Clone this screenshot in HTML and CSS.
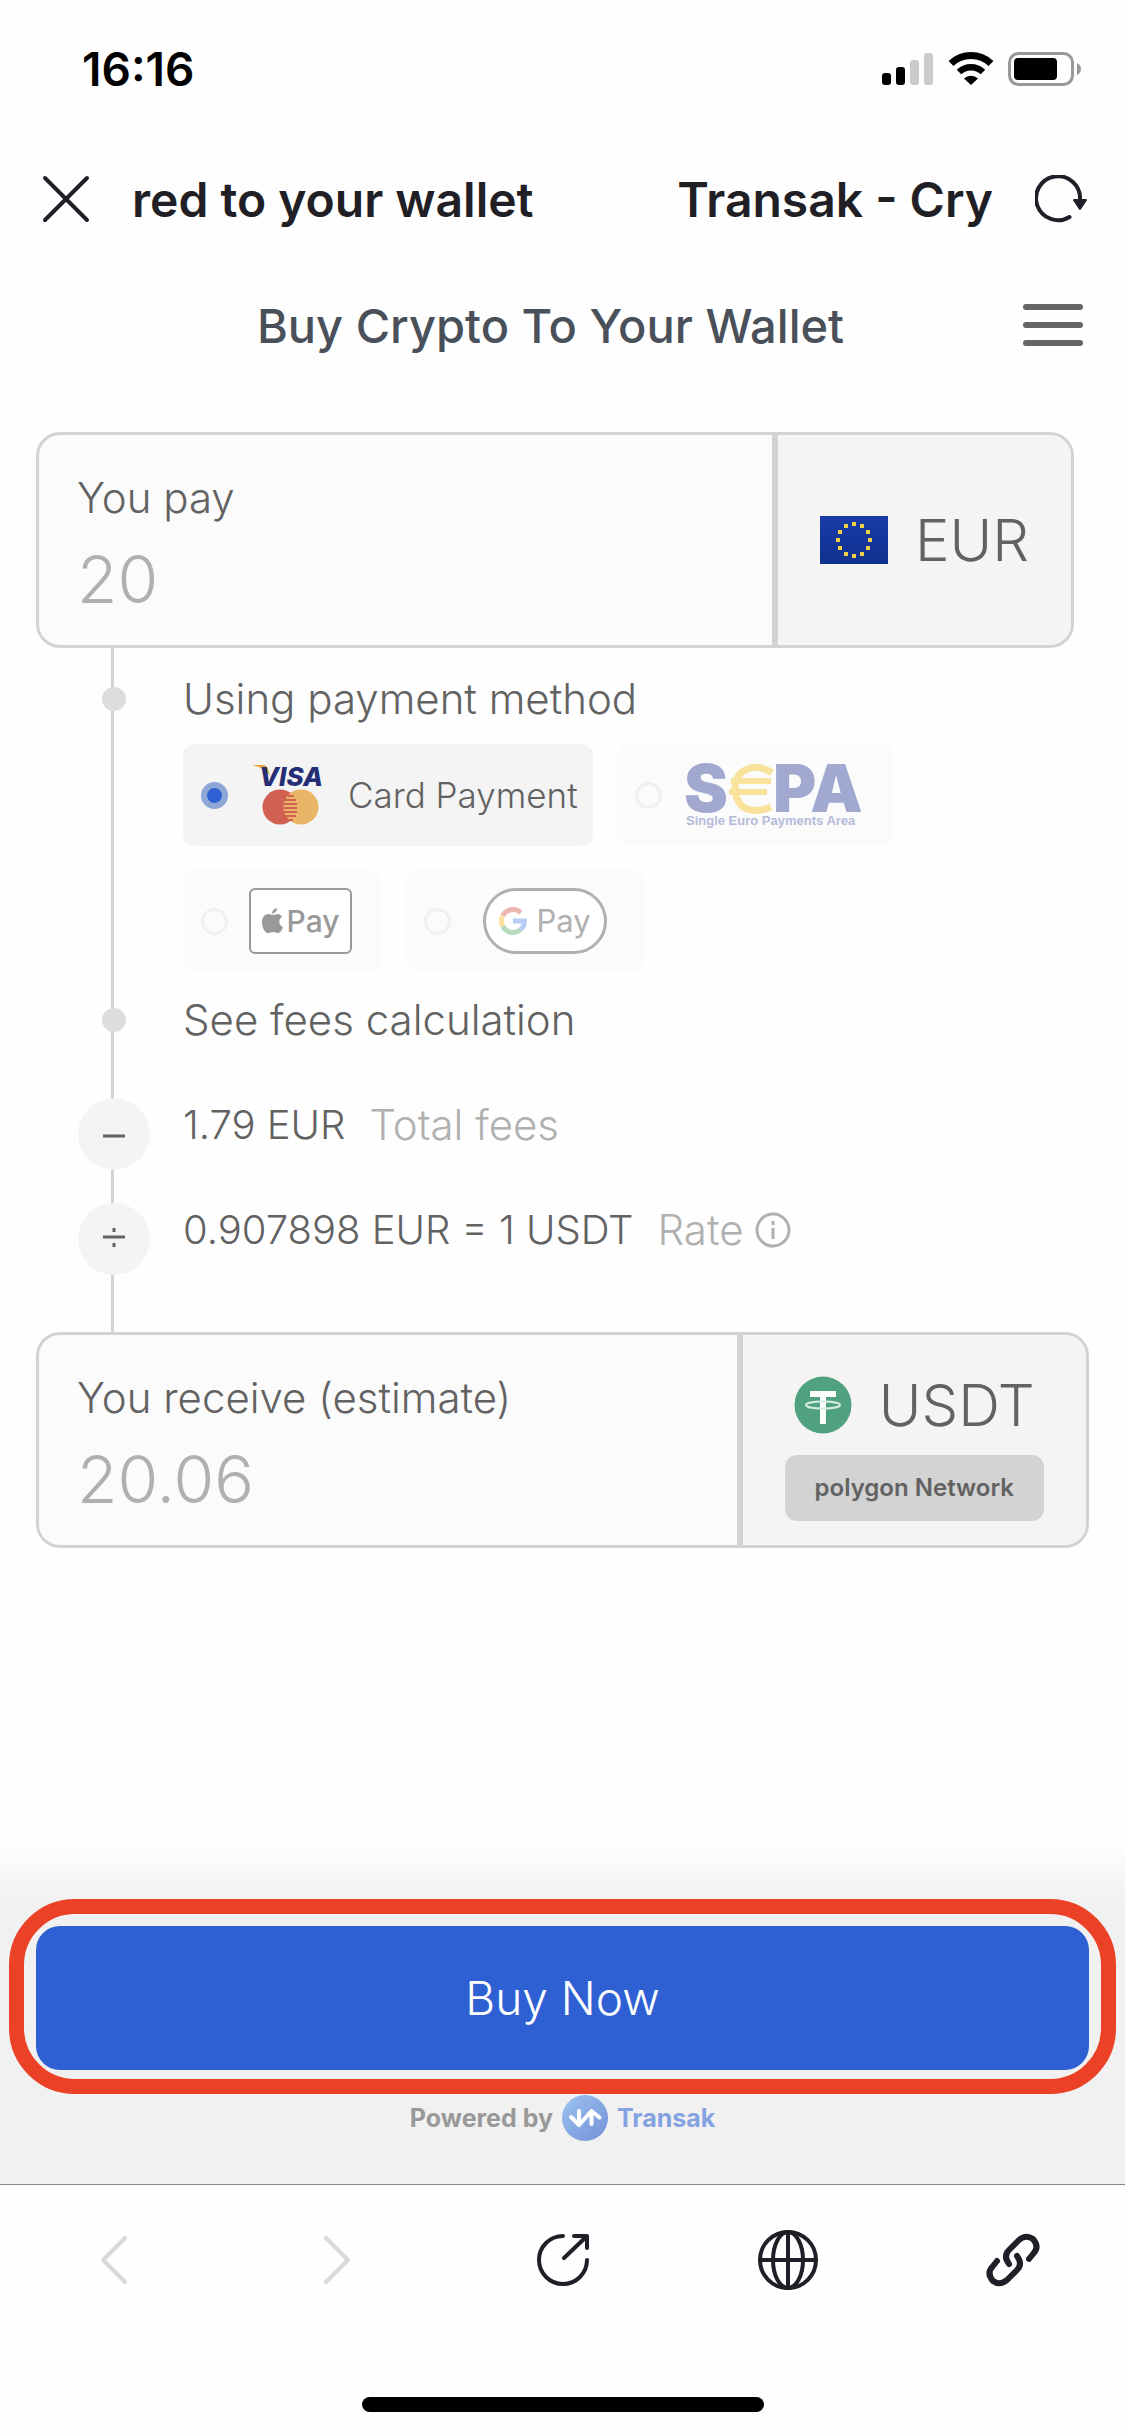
FILE: index.html
```html
<!DOCTYPE html>
<html lang="en">
<head>
  <meta charset="UTF-8">
  <meta name="viewport" content="width=device-width, initial-scale=1">
  <title>Transak - Crypto delivered to your wallet</title>
  <link rel="stylesheet" href="styles.css">
</head>
<body>

  <div class="status-bar">
    <time class="clock">16:16</time>
    <div class="status-icons">
      <svg width="52" height="34" viewBox="0 0 52 34">
        <rect x="0" y="21" width="9" height="12" rx="3"/>
        <rect x="14" y="15" width="9" height="18" rx="3"/>
        <rect x="28" y="8" width="9" height="25" rx="3" fill="#cbcbcb"/>
        <rect x="42" y="1" width="9" height="32" rx="3" fill="#cbcbcb"/>
      </svg>
      <svg width="46" height="34" viewBox="0 0 46 34">
        <path d="M3 11.500A29 29 0 0 1 43 11.500" fill="none" stroke="#000" stroke-width="7"/>
        <path d="M11 20A17.500 17.500 0 0 1 35 20" fill="none" stroke="#000" stroke-width="6.500"/>
        <path d="M16 26.500A10 10 0 0 1 30 26.500L23 33z"/>
      </svg>
      <svg width="74" height="34" viewBox="0 0 74 34">
        <rect x="1.500" y="1.500" width="63" height="31" rx="9" fill="none" stroke="#999" stroke-width="3"/>
        <rect x="6" y="6" width="43" height="22" rx="4"/>
        <path d="M69 11q4 2 4 6t-4 6z" fill="#999"/>
      </svg>
    </div>
  </div>

  <header class="browser-bar">
    <button class="icon-btn" aria-label="Close">
      <svg width="48" height="48" viewBox="0 0 48 48"><path d="M3 3l42 42M45 3L3 45"/></svg>
    </button>
    <div class="ticker"><span>red to your wallet</span><span>Transak - Cry</span></div>
    <button class="icon-btn" aria-label="Reload">
      <svg width="52" height="48" viewBox="0 0 52 48">
        <path d="M34.500 42A22 22 0 1 1 45 24.500"/>
        <path d="M39 25h12l-6 9z" fill="#1f1f28" stroke-width="2"/>
      </svg>
    </button>
  </header>

  <main class="widget">
    <div class="title-row">
      <h1>Buy Crypto To Your Wallet</h1>
      <button class="menu-btn" aria-label="Menu"><i></i><i></i><i></i></button>
    </div>

    <section class="amount-card pay">
      <div class="amount">
        <label for="pay">You pay</label>
        <input id="pay" type="text" value="20">
      </div>
      <button class="currency">
        <svg width="68" height="48" viewBox="0 0 68 48">
          <defs>
            <linearGradient id="eu" x2="0" y2="1"><stop stop-color="#183ba8"/><stop offset="1" stop-color="#11318f"/></linearGradient>
          </defs>
          <rect width="68" height="48" fill="url(#eu)"/>
          <g fill="#f0cf45">
            <path d="M32 6h4v4h-4zM40 8h4v4h-4zM46 14h4v4h-4zM48 22h4v4h-4zM46 30h4v4h-4zM40 36h4v4h-4zM32 38h4v4h-4zM24 36h4v4h-4zM18 30h4v4h-4zM16 22h4v4h-4zM18 14h4v4h-4zM24 8h4v4h-4z"/>
          </g>
        </svg>
        <span>EUR</span>
      </button>
    </section>

    <ul class="steps">
      <li class="step methods-step">
        <span class="dot"></span>
        <fieldset>
          <legend>Using payment method</legend>
          <div class="methods">
            <label class="method selected">
              <input type="radio" name="method" checked>
              <svg width="78" height="62" viewBox="-3 0 78 62">
                <path d="M0 1h11q4 0 5 4l2 7Q13 4 0 1z" fill="#e9a23b"/>
                <text x="7" y="22" class="visa">VISA</text>
                <circle cx="28" cy="43" r="17.500" fill="#d15f52"/>
                <circle cx="49" cy="43" r="17.500" fill="#e9b566"/>
                <path d="M36 32h6M33 36h11M32 40h13M32 44h13M32 48h13M33 52h11M36 56h5" stroke="#d15f52" stroke-width="2"/>
              </svg>
              <span>Card Payment</span>
            </label>
            <label class="method">
              <input type="radio" name="method">
              <svg class="sepa" width="181" height="68" viewBox="-3 0 181 68">
                <text x="-2" y="51" class="sepa-main">S</text>
                <path d="M86 12Q70 1 56 11Q49 17 49 27Q49 39 57 46Q69 53 85 46" fill="none" stroke="#f9e29b" stroke-width="7"/>
                <path d="M45 20h40M43 31h38" stroke="#f9e29b" stroke-width="6"/>
                <text x="87" y="51" class="sepa-main">PA</text>
                <text x="0" y="64" class="sepa-sub">Single Euro Payments Area</text>
              </svg>
            </label>
            <label class="method">
              <input type="radio" name="method">
              <span class="wallet apple">
                <svg width="22" height="26" viewBox="0 0 22 26" fill="#999">
                  <path d="M15 0c0 3-2 5.500-5 5.500C10 2.500 12 .5 15 0zM20 9c-4 2.500-3.500 8 1 10c-1 3-3 6-5 6c-2 0-3-1-5-1s-3 1-5 1C3 25 0 20 0 14c0-5 3-8 6.500-8c2 0 3 1 4.500 1s3-1 5-1c1.500 0 3 .8 4 3z"/>
                </svg>
                <span>Pay</span>
              </span>
            </label>
            <label class="method gpay">
              <input type="radio" name="method">
              <span class="wallet google">
                <svg width="28" height="28" viewBox="0 0 28 28" fill="none" stroke-width="5">
                  <path d="M21.800 5.600A11.500 11.500 0 0 0 3.800 8.600" stroke="#ecb5af"/>
                  <path d="M3.800 8.600A11.500 11.500 0 0 0 3.800 19.400" stroke="#fae3a2"/>
                  <path d="M3.800 19.400A11.500 11.500 0 0 0 21.500 22.700" stroke="#b6dbbc"/>
                  <path d="M21.500 22.700A11.500 11.500 0 0 0 25.500 14H14" stroke="#b8cdf6"/>
                </svg>
                <span>Pay</span>
              </span>
            </label>
          </div>
        </fieldset>
      </li>
      <li class="step">
        <span class="dot"></span>
        <a href="#fees">See fees calculation</a>
      </li>
      <li class="step">
        <span class="op"><svg width="24" height="24" viewBox="0 0 24 24"><path d="M1 14h22"/></svg></span>
        <p>1.79 EUR <span class="muted">Total fees</span></p>
      </li>
      <li class="step">
        <span class="op"><svg width="24" height="24" viewBox="0 0 24 24"><path d="M1 10h22M12 1v4M12 16v4"/></svg></span>
        <p>0.907898 EUR = 1 USDT <span class="muted">Rate</span>
          <svg class="info" width="36" height="36" viewBox="0 0 36 36"><circle cx="18" cy="18" r="16"/><path d="M18 16v11M18 9v4"/></svg>
        </p>
      </li>
    </ul>

    <section class="amount-card">
      <div class="amount">
        <label for="receive">You receive (estimate)</label>
        <input id="receive" type="text" value="20.06" readonly>
      </div>
      <button class="currency crypto">
        <span class="coin">
          <svg width="58" height="58" viewBox="0 0 58 58">
            <circle cx="29" cy="29" r="28.500" fill="#50a180"/>
            <path d="M16 15h26v6H32v27h-6V21H16z" fill="#fff"/>
            <ellipse cx="29" cy="29" rx="17" ry="3.500" fill="none" stroke="#d5eae1" stroke-width="2"/>
          </svg>
          <span>USDT</span>
        </span>
        <span class="network">polygon Network</span>
      </button>
    </section>
  </main>

  <footer class="buy-bar">
    <div class="highlight"><button class="buy-btn">Buy Now</button></div>
    <p class="powered">
      Powered by
      <svg width="46" height="46" viewBox="0 0 46 46">
        <defs><linearGradient id="tr" x2="1" y2="1"><stop stop-color="#9cc3ef"/><stop offset="1" stop-color="#7390d8"/></linearGradient></defs>
        <circle cx="23" cy="23" r="23" fill="url(#tr)"/>
        <path d="M17 16v13M9 22l8 8 12.500-14 8 6.500M29.500 16v13" fill="none" stroke="#fff" stroke-width="4" stroke-linecap="round" stroke-linejoin="round"/>
      </svg>
      <a href="#transak">Transak</a>
    </p>
  </footer>

  <nav class="toolbar">
    <button class="icon-btn" aria-label="Back" disabled><svg width="60" height="60" viewBox="0 0 60 60"><path d="M42 8L20 30l22 22"/></svg></button>
    <button class="icon-btn" aria-label="Forward" disabled><svg width="60" height="60" viewBox="0 0 60 60"><path d="M18 8l22 22-22 22"/></svg></button>
    <button class="icon-btn" aria-label="Share"><svg width="60" height="60" viewBox="0 0 60 60"><path d="M30 6A24 24 0 1 0 54 30M31 28L53 7M41 6h13v12"/></svg></button>
    <button class="icon-btn" aria-label="Browser"><svg width="60" height="60" viewBox="0 0 60 60"><circle cx="30" cy="30" r="28"/><ellipse cx="30" cy="30" rx="15" ry="28"/><path d="M2 30h56M30 2v56"/></svg></button>
    <button class="icon-btn" aria-label="Copy link"><svg class="link" width="60" height="60" viewBox="0 0 60 60"><path d="M26 34q-6-8 0-14L36 10q7-6 14-1q7 8 0 15l-4 5M34 26q6 8 0 14L24 50q-7 6-14 1q-7-8 0-15l4-5"/></svg></button>
  </nav>
  <div class="home-bar"></div>

</body>
</html>
```
FILE: styles.css
```css
* {
  box-sizing: border-box;
}
body {
  margin: 0;
  min-height: 100vh;
  display: flex;
  flex-direction: column;
  background: #fefefe;
  font-family: Inter, "Liberation Sans", sans-serif;
  font-size: 42px;
  font-weight: 300;
  color: #626262;
}
button, input {
  font: inherit;
  color: inherit;
}
button {
  padding: 0;
  border: none;
  background: none;
  cursor: pointer;
}
svg {
  display: block;
  flex: none;
}
h1, p, ul, fieldset {
  margin: 0;
  padding: 0;
  border: none;
}

/* phone and browser bars */
.status-bar {
  display: flex;
  justify-content: space-between;
  align-items: center;
  height: 138px;
  padding: 0 43px 0 82px;
}
.clock {
  font-size: 46px;
  font-weight: 600;
  color: #000;
}
.status-icons {
  display: flex;
  gap: 14px;
}
.browser-bar {
  display: flex;
  align-items: center;
  height: 122px;
  padding: 0 38px 0 42px;
  gap: 42px;
}
.icon-btn svg {
  fill: none;
  stroke: #1f1f28;
  stroke-width: 4;
  stroke-linecap: round;
  stroke-linejoin: round;
}
.ticker {
  flex: 1;
  display: flex;
  justify-content: space-between;
  overflow: hidden;
  white-space: nowrap;
  font-size: 48px;
  font-weight: 600;
  color: #1f1f25;
}

/* widget */
.widget {
  padding: 0 36px;
}
.title-row {
  display: flex;
  align-items: center;
  height: 130px;
  padding-right: 6px;
}
.title-row h1 {
  flex: 1;
  padding-left: 42px;
  text-align: center;
  font-size: 47px;
  font-weight: 500;
  color: #495059;
}
.menu-btn {
  display: grid;
  gap: 12px;
  width: 60px;
}
.menu-btn i {
  height: 6px;
  border-radius: 3px;
  background: #666;
}
.amount-card {
  display: flex;
  height: 216px;
  border: 3px solid #d3d3d3;
  border-radius: 24px;
  background: #fbfbfb;
  overflow: hidden;
}
.pay {
  margin: 42px 15px 0 0;
}
.amount {
  flex: 1;
  min-width: 0;
  padding: 36px 38px 0;
}
.amount label {
  display: block;
  line-height: 54px;
}
.amount input {
  width: 100%;
  height: 84px;
  margin-top: 12px;
  padding: 0;
  border: none;
  outline: none;
  background: none;
  font-size: 66px;
  color: #b0b0b0;
}
.currency {
  display: flex;
  align-items: center;
  gap: 27px;
  padding: 0 42px;
  border-left: 6px solid #d3d3d3;
  background: #f4f4f4;
  font-size: 58px;
}
.crypto {
  flex-direction: column;
  justify-content: flex-end;
  gap: 14px;
  padding-bottom: 24px;
}
.coin {
  display: flex;
  align-items: center;
  gap: 27px;
  line-height: 72px;
}
.network {
  padding: 0 30px;
  border-radius: 12px;
  background: #d3d3d3;
  font-size: 24px;
  font-weight: 600;
  line-height: 66px;
}

/* steps, joined by the line on the left */
.steps {
  list-style: none;
  padding: 24px 0 24px 42px;
  background: linear-gradient(#d3d3d3, #d3d3d3) 75px 0 / 3px 100% no-repeat;
}
.step {
  display: grid;
  grid-template-columns: 72px 1fr;
  column-gap: 33px;
  min-height: 105px;
  line-height: 54px;
}
.methods-step {
  min-height: 321px;
}
.dot {
  justify-self: center;
  width: 24px;
  height: 24px;
  margin-top: 15px;
  border-radius: 50%;
  background: #ddd;
}
.op {
  display: grid;
  place-items: center;
  width: 72px;
  height: 72px;
  border-radius: 50%;
  background: #f4f4f4;
}
.op svg {
  fill: none;
  stroke: #626262;
  stroke-width: 3;
}
.step a {
  color: inherit;
  text-decoration: none;
}
.step p {
  display: flex;
  align-items: center;
  height: 54px;
  gap: 12px;
  font-size: 40px;
}
.muted {
  margin-left: 12px;
  font-size: 42px;
  color: #b0b0b0;
}
.info {
  fill: none;
  stroke: #b0b0b0;
  stroke-width: 3;
}
legend {
  padding: 0;
}
.methods {
  display: flex;
  flex-wrap: wrap;
  gap: 24px;
  padding-top: 18px;
}
.method {
  display: flex;
  align-items: center;
  height: 102px;
  padding: 0 30px 0 18px;
  gap: 21px;
  border-radius: 12px;
  background: #fbfbfb;
  font-size: 35px;
}
.method.selected {
  padding-right: 15px;
  background: #f4f4f4;
}
.method input {
  appearance: none;
  flex: none;
  width: 27px;
  height: 27px;
  margin: 0;
  border: 3px solid #f0f0f0;
  border-radius: 50%;
}
.method input:checked {
  border: 6px solid #8fa7d7;
  background: #2f60d3;
}
.visa {
  font-size: 26px;
  font-weight: 800;
  font-style: italic;
  fill: #252d75;
}
.sepa-main {
  font-size: 66px;
  font-weight: 900;
  fill: #a1a9d0;
}
.sepa-sub {
  font-family: "Liberation Sans", sans-serif;
  font-size: 13px;
  font-weight: 700;
  fill: #b5bad9;
}
.wallet {
  display: flex;
  align-items: center;
  justify-content: center;
  height: 66px;
  background: #fff;
}
.apple {
  width: 103px;
  gap: 3px;
  border: 2px solid #999;
  border-radius: 6px;
  font-size: 30px;
  font-weight: 500;
  color: #999;
}
.google {
  width: 124px;
  gap: 9px;
  border: 3px solid #b0b0b0;
  border-radius: 33px;
  font-size: 31px;
  font-weight: 400;
  color: #b0b0b0;
}
.gpay {
  gap: 32px;
  padding-right: 38px;
}

/* footer */
.buy-bar {
  margin-top: auto;
  padding: 57px 9px 42px;
  background: linear-gradient(#fefefe, #f1f1f1 60px);
}
.highlight {
  padding: 12px 12px 9px;
  border: 15px solid #eb4227;
  border-radius: 66px;
}
.buy-btn {
  display: block;
  width: 100%;
  height: 144px;
  border-radius: 24px;
  background: #2f60d3;
  font-size: 46px;
  color: #fff;
}
.powered {
  display: flex;
  justify-content: center;
  align-items: center;
  gap: 9px;
  height: 48px;
  font-size: 25px;
  font-weight: 700;
  color: #999;
}
.powered a {
  color: #85a2e2;
  text-decoration: none;
}
.toolbar {
  display: grid;
  grid-template-columns: repeat(5, 1fr);
  justify-items: center;
  align-items: center;
  height: 150px;
  border-top: 1px solid #85858b;
}
.toolbar .icon-btn:disabled svg {
  stroke: #d8d8d8;
}
.toolbar .link {
  stroke-width: 6;
}
.home-bar {
  width: 402px;
  height: 15px;
  margin: 63px auto 24px;
  border-radius: 8px;
  background: #000;
}
```
